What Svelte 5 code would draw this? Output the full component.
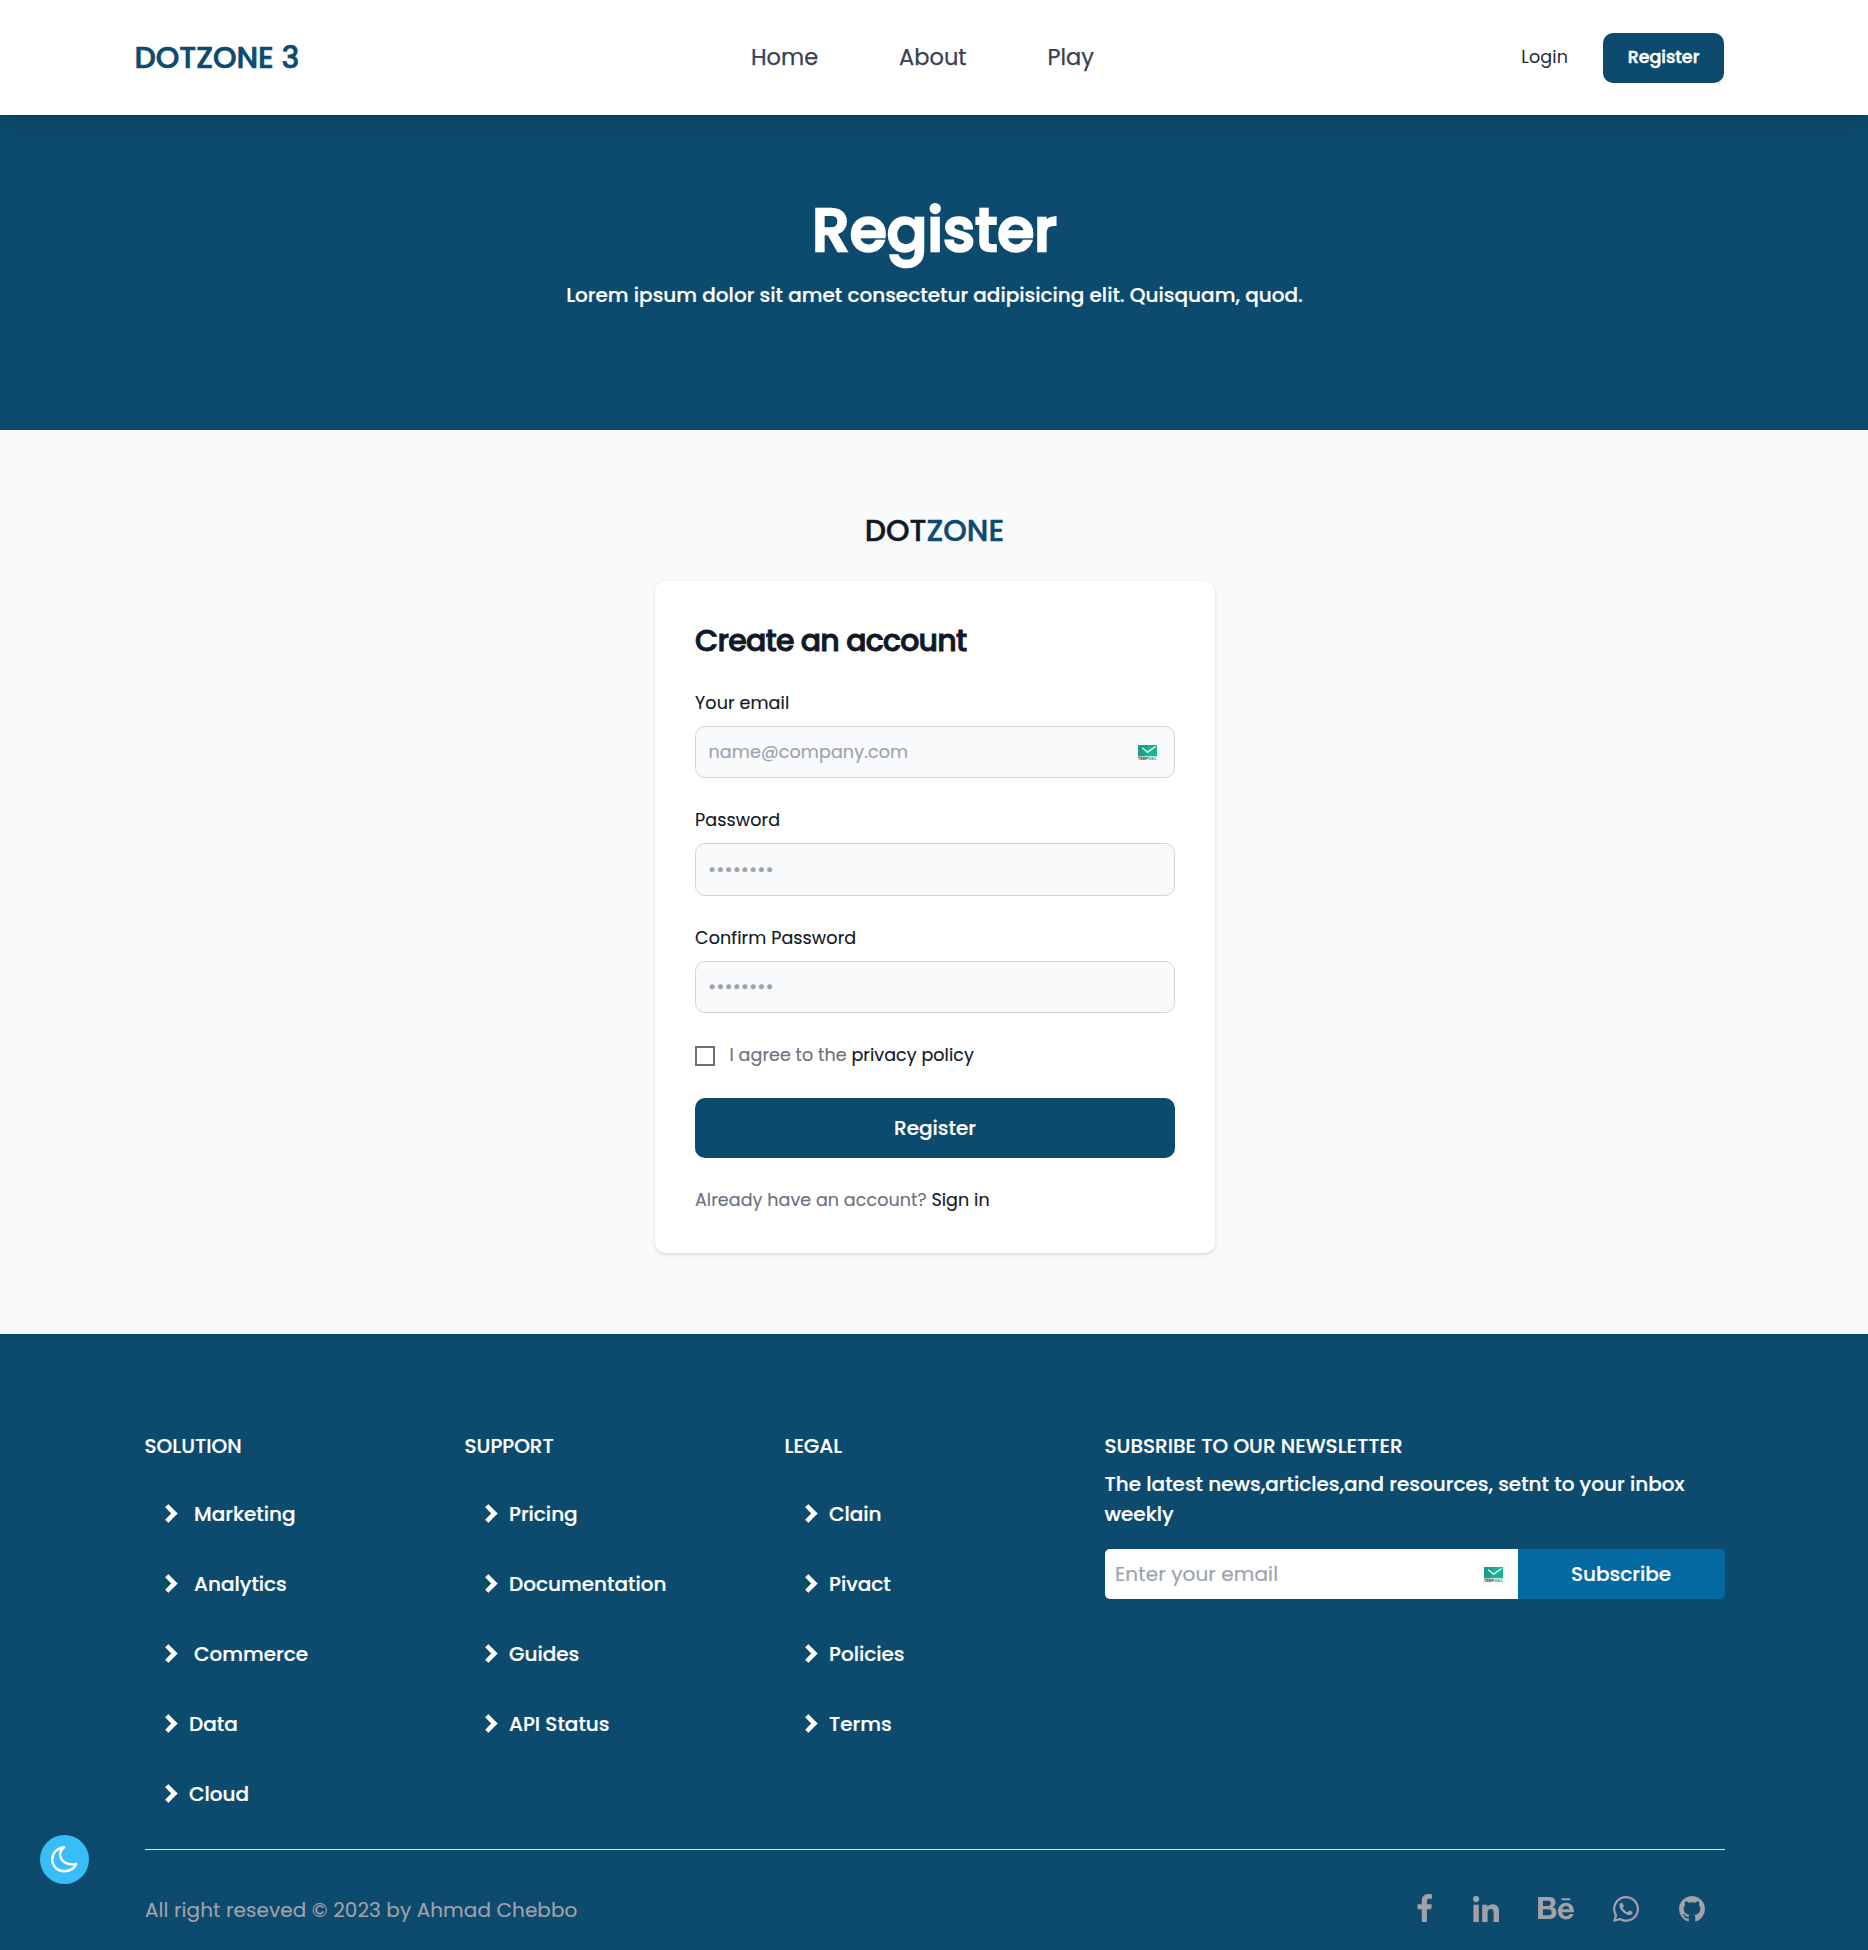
<script>
  const nav = ['Home', 'About', 'Play'];
  const columns = [
    {
      title: 'SOLUTION',
      links: [
        { label: 'Marketing', wide: true },
        { label: 'Analytics', wide: true },
        { label: 'Commerce', wide: true },
        { label: 'Data' },
        { label: 'Cloud' }
      ]
    },
    {
      title: 'SUPPORT',
      links: [{ label: 'Pricing' }, { label: 'Documentation' }, { label: 'Guides' }, { label: 'API Status' }]
    },
    {
      title: 'LEGAL',
      links: [{ label: 'Clain' }, { label: 'Pivact' }, { label: 'Policies' }, { label: 'Terms' }]
    }
  ];
  const fields = [
    { id: 'email', label: 'Your email', type: 'email', placeholder: 'name@company.com', mail: true },
    { id: 'password', label: 'Password', type: 'password', placeholder: '••••••••' },
    { id: 'confirm', label: 'Confirm Password', type: 'password', placeholder: '••••••••' }
  ];
</script>

{#snippet mailBadge()}
  <svg class="mail" viewBox="0 0 19 16" aria-hidden="true">
    <rect x="0" y="0" width="19" height="11.3" rx="0.6" fill="#1bb394" />
    <path d="M0 0H10L6 11.3H0Z" fill="#1f9c87" />
    <path d="M4.3 2.8L9.5 7.2L17.6 1.5" fill="none" stroke="#fff" stroke-width="1.4" />
    <text class="temp" x="0.1" y="15.3" textLength="9.8" lengthAdjust="spacingAndGlyphs">TEMP</text>
    <text class="tail" x="10" y="15.3" textLength="8.8" lengthAdjust="spacingAndGlyphs">MAIL</text>
  </svg>
{/snippet}

<div class="page">
  <header>
    <a class="logo" href="/">DOTZONE 3</a>
    <nav>
      {#each nav as item}<a href="/">{item}</a>{/each}
    </nav>
    <div class="auth">
      <a class="login" href="/">Login</a>
      <a class="signup" href="/">Register</a>
    </div>
  </header>

  <section class="hero">
    <h1>Register</h1>
    <p>Lorem ipsum dolor sit amet consectetur adipisicing elit. Quisquam, quod.</p>
  </section>

  <main>
    <a class="brand" href="/">DOT<span>ZONE</span></a>
    <form class="card">
      <h2>Create an account</h2>
      {#each fields as f}
        <div class="field">
          <label for={f.id}>{f.label}</label>
          <div class="control">
            <input id={f.id} type={f.type} placeholder={f.placeholder} />
            {#if f.mail}<span class="badge">{@render mailBadge()}</span>{/if}
          </div>
        </div>
      {/each}
      <div class="agree">
        <span class="box"></span>
        <span>I agree to the <a href="/">privacy policy</a></span>
      </div>
      <button type="button" class="submit">Register</button>
      <p class="have">Already have an account? <a href="/">Sign in</a></p>
    </form>
  </main>

  <footer>
    <div class="cols">
      {#each columns as col}
        <div class="col">
          <h3>{col.title}</h3>
          <ul>
            {#each col.links as link}
              <li>
                <svg class="chev" viewBox="0 0 13 19" aria-hidden="true">
                  <path d="M0.5 3.2L3.3 0.4L12.4 9.5L3.3 18.6L0.5 15.8L6.4 9.5Z" />
                </svg>
                <a class:wide={link.wide} href="/">{link.label}</a>
              </li>
            {/each}
          </ul>
        </div>
      {/each}
      <div class="news">
        <h3>SUBSRIBE TO OUR NEWSLETTER</h3>
        <p>The latest news,articles,and resources, setnt to your inbox weekly</p>
        <div class="subscribe">
          <input type="email" placeholder="Enter your email" />
          <span class="badge tile">{@render mailBadge()}</span>
          <button type="button">Subscribe</button>
        </div>
      </div>
    </div>
    <div class="bottom">
      <p>All right reseved © 2023 by Ahmad Chebbo</p>
      <div class="social">
        <svg class="fb" viewBox="479 0 864 1664"><path d="M1343 12v264h-157q-86 0-116 36t-30 108v189h293l-39 296h-254v759h-306v-759h-255v-296h255v-218q0-186 104-288.5t277-102.5q147 0 228 12z" /></svg>
        <svg class="in" viewBox="0 0 448 448"><path d="M100.28 448H7.4V148.9h92.88zM53.79 108.1C24.09 108.1 0 83.5 0 53.8a53.79 53.79 0 0 1 107.58 0c0 29.7-24.1 54.3-53.79 54.3zM447.9 448h-92.68V302.4c0-34.7-.7-79.2-48.29-79.2-48.29 0-55.69 37.7-55.69 76.7V448h-92.78V148.9h89.08v40.8h1.3c12.4-23.5 42.69-48.3 87.88-48.3 94 0 111.28 61.9 111.28 142.3V448z" /></svg>
        <svg class="be" viewBox="0 75 576 362"><path d="M232 237.2c31.8-15.2 48.4-38.2 48.4-74 0-70.6-52.6-87.8-113.3-87.8H0v354.4h171.8c64.4 0 124.9-30.9 124.9-102.9 0-44.5-21.1-77.4-64.7-89.7zM77.9 135.9H151c28.1 0 53.4 7.9 53.4 40.5 0 30.1-19.7 42.2-47.5 42.2h-79v-82.7zm83.3 233.7H77.9V272h84.9c34.3 0 56 14.3 56 50.6 0 35.8-25.9 47-57.6 47zm358.5-240.7H376V94h143.7v34.9zM576 305.2c0-75.9-44.4-139.2-124.9-139.2-78.2 0-131.3 58.8-131.3 135.8 0 79.9 50.3 134.7 131.3 134.7 61.3 0 101-27.6 120.1-86.3H509c-6.7 21.9-34.3 33.5-55.7 33.5-41.3 0-63-24.2-63-65.3h185.1c.3-4.2.6-8.7.6-13.2zM390.4 274c2.3-33.7 24.7-54.8 58.5-54.8 35.4 0 53.2 20.8 56.2 54.8H390.4z" /></svg>
        <svg class="wa" viewBox="0 32 448 448"><path d="M380.9 97.1C339 55.1 283.2 32 223.9 32c-122.4 0-222 99.6-222 222 0 39.1 10.2 77.3 29.6 111L0 480l117.7-30.9c32.4 17.7 68.9 27 106.1 27h.1c122.3 0 224.1-99.6 224.1-222 0-59.3-25.2-115-67.1-157zm-157 341.6c-33.2 0-65.7-8.9-94-25.7l-6.7-4-69.8 18.3L72 359.2l-4.4-7c-18.5-29.4-28.2-63.3-28.2-98.2 0-101.7 82.8-184.5 184.6-184.5 49.3 0 95.6 19.2 130.4 54.1 34.8 34.9 56.2 81.2 56.1 130.5 0 101.8-84.9 184.6-186.6 184.6zm101.2-138.2c-5.5-2.8-32.8-16.2-37.9-18-5.1-1.9-8.8-2.8-12.5 2.8-3.7 5.6-14.3 18-17.6 21.8-3.2 3.7-6.5 4.2-12 1.4-32.6-16.3-54-29.1-75.5-66-5.7-9.8 5.7-9.1 16.3-30.3 1.8-3.7.9-6.9-.5-9.7-1.4-2.8-12.5-30.1-17.1-41.2-4.5-10.8-9.1-9.3-12.5-9.5-3.2-.2-6.9-.2-10.6-.2-3.7 0-9.7 1.4-14.8 6.9-5.1 5.6-19.4 19-19.4 46.3 0 27.3 19.9 53.7 22.6 57.4 2.8 3.7 39.1 59.7 94.8 83.8 35.2 15.2 49 16.5 66.6 13.9 10.7-1.6 32.8-13.4 37.4-26.4 4.6-13 4.6-24.1 3.2-26.4-1.3-2.5-5-3.9-10.5-6.6z" /></svg>
        <svg class="gh" viewBox="128 128 1536 1536"><path d="M896 128q209 0 385.5 103t279.5 279.5 103 385.5q0 251-146.5 451.5t-378.5 277.5q-27 5-40-7t-13-30q0-3 .5-76.5t.5-134.5q0-97-52-142 57-6 102.5-18t94-39 81-66.5 53-105 20.5-150.5q0-119-79-206 37-91-8-204-28-9-81 11t-92 44l-38 24q-93-26-192-26t-192 26q-16-11-42.5-27t-83.5-38.5-85-13.5q-45 113-8 204-79 87-79 206 0 85 20.5 150t52.5 105 80.5 67 94 39 102.5 18q-39 36-49 103-21 10-45 15t-57 5-65.5-21.5-55.5-62.5q-19-32-48.5-52t-49.5-24l-20-3q-21 0-29 4.5t-5 11.5 9 14 13 12l7 5q22 10 43.5 38t31.5 51l10 23q13 38 44 61.5t67 30 69.5 7 55.5-3.5l23-4q0 38 .5 88.5t.5 54.5q0 18-13 30t-40 7q-232-77-378.5-277.5t-146.5-451.5q0-209 103-385.5t279.5-279.5 385.5-103z" /></svg>
      </div>
    </div>
  </footer>

  <button type="button" class="theme" aria-label="Toggle dark mode">
    <svg viewBox="0 0 26.5 26.5">
      <path d="M13.2 1.2C6 2 1.2 7 1.2 13.5C1.2 20 6.5 25.2 13 25.2C18.5 25.2 23.5 22.5 25.3 17.8C17 20 9.2 15.5 9.2 8.5C9.2 5.5 10.7 3 13.2 1.2Z" />
    </svg>
  </button>
</div>

<style>
  :global(body) { margin: 0; background: #0c4a6e; }
  .page { position: relative; width: 1868px; height: 1950px; overflow: hidden; font-family: Poppins, Inter, 'Open Sans', sans-serif; background: #0c4a6e; }
  .page * { box-sizing: border-box; }
  a { color: inherit; text-decoration: none; }
  h1, h2, h3, p, ul { margin: 0; padding: 0; }
  ul { list-style: none; }
  button, input { font-family: inherit; border: 0; margin: 0; }

  header { position: relative; z-index: 1; display: grid; grid-template-columns: 616.5px 1fr auto; align-items: center; height: 115px; padding: 0 144px 0 134.5px; background: #fff; box-shadow: 0 12.5px 19px -4px rgba(0, 0, 0, 0.1), 0 5px 7.5px -5px rgba(0, 0, 0, 0.1); }
  .logo { font-size: 30px; line-height: 40px; font-weight: 500; color: #0c4a6e; -webkit-text-stroke: 0.7px; }
  nav { display: flex; gap: 81px; font-size: 22.5px; line-height: 35px; color: #374151; -webkit-text-stroke: 0.25px; }
  .auth { display: flex; justify-content: flex-end; align-items: center; gap: 35px; font-size: 17.5px; line-height: 25px; }
  .login { color: #1f2937; letter-spacing: 0.12px; }
  .signup { width: 121px; padding: 12.5px 0; border-radius: 10px; background: #0c4a6e; color: #fff; font-weight: 500; text-align: center; -webkit-text-stroke: 0.5px; }

  .hero { height: 315px; padding: 84px 0 0 1px; text-align: center; color: #fff; }
  .hero h1 { font-size: 60px; line-height: 62px; font-weight: 500; letter-spacing: -0.1px; -webkit-text-stroke: 2.5px; }
  .hero p { margin-top: 19px; font-size: 20px; line-height: 30px; font-weight: 500; -webkit-text-stroke: 0.2px; }

  main { display: flex; flex-direction: column; align-items: center; height: 904px; padding: 81px 0 0 2px; background: #f9fafb; color: #111827; }
  .brand { margin: 0 1px 30px 0; font-size: 30px; line-height: 40px; font-weight: 500; -webkit-text-stroke: 0.45px; }
  .brand span { color: #0c4a6e; }
  .card { width: 560px; height: 672px; padding: 40px; border-radius: 10px; background: #fff; box-shadow: 0 1.25px 3.75px rgba(0, 0, 0, 0.1), 0 1.25px 2.5px -1.25px rgba(0, 0, 0, 0.1); }
  h2 { margin-bottom: 30px; font-size: 30px; line-height: 40px; font-weight: 500; letter-spacing: -0.75px; -webkit-text-stroke: 0.9px; }
  .field { margin-bottom: 30px; }
  label { display: block; margin-bottom: 10px; font-size: 17.5px; line-height: 25px; letter-spacing: 0.12px; -webkit-text-stroke: 0.15px; }
  .control { position: relative; display: flex; }
  .control input { width: 100%; height: 52.4px; padding: 0 12.5px; border: 1px solid #d1d5db; border-radius: 10px; background: #f9fafb; font-size: 17.5px; letter-spacing: 0.12px; -webkit-text-stroke: 0.2px; }
  .control input[type='password'] { letter-spacing: 1px; -webkit-text-stroke: 0.7px; }
  input::placeholder { color: #9ca3af; opacity: 1; }
  .badge { position: absolute; right: 18px; top: 19px; display: flex; }
  .mail { width: 19px; height: 16px; -webkit-text-stroke: 0; }
  .mail text { font: 700 3.6px 'Liberation Sans', sans-serif; }
  .temp { fill: #1f2f3f; }
  .tail { fill: #1bb394; }
  .agree { display: flex; align-items: center; gap: 14.5px; margin-bottom: 30px; font-size: 17.5px; line-height: 25px; letter-spacing: 0.07px; color: #6b7280; -webkit-text-stroke: 0.15px; }
  .agree a, .have a { color: #111827; }
  .box { width: 20px; height: 20px; border: 2px solid #707070; background: #fff; }
  .submit { display: block; width: 100%; height: 60px; padding: 0; border-radius: 10px; background: #0c4a6e; color: #fff; font-size: 20px; font-weight: 500; -webkit-text-stroke: 0.2px; }
  .have { margin-top: 30px; font-size: 17.5px; line-height: 25px; letter-spacing: 0.07px; color: #6b7280; -webkit-text-stroke: 0.15px; }

  footer { padding: 97px 143px 0 145px; color: #fff; font-size: 20px; line-height: 30px; font-weight: 500; }
  .cols { display: grid; grid-template-columns: 320px 320px 320px 620px; height: 418px; -webkit-text-stroke: 0.2px; }
  h3 { margin-left: -0.5px; font-size: 20px; line-height: 30px; font-weight: 500; }
  .col ul { margin-top: 38px; padding-left: 20px; }
  li { display: flex; align-items: center; height: 30px; margin-bottom: 40px; }
  .chev { width: 13px; height: 19px; margin: -2px 11px 0 0; fill: #fff; stroke: #fff; stroke-width: 0.6; stroke-linejoin: round; }
  .wide { padding-left: 5px; }
  .news p { margin: 8px 0 0 -0.5px; }
  .subscribe { position: relative; display: flex; height: 50px; margin-top: 20px; border-radius: 5px; overflow: hidden; }
  .subscribe input { width: 413px; padding: 0 10px; background: #fff; font-size: 20px; letter-spacing: 0.1px; }
  .subscribe button { flex: 1; padding: 0 1px 0 0; background: #0369a1; color: #fff; font-size: 20px; font-weight: 500; }
  .tile { right: auto; left: 376px; top: 13px; width: 25px; height: 25px; padding-right: 1px; align-items: center; justify-content: center; border-radius: 3px; background: #f9fafb; }

  .bottom { display: flex; justify-content: space-between; border-top: 1px solid #e5e7eb; width: 1580px; padding-top: 45px; color: #a1a1aa; font-weight: 400; letter-spacing: 0.09px; -webkit-text-stroke: 0.15px; }
  .social { display: flex; align-items: flex-start; height: 30px; padding-right: 20px; fill: #a1a1aa; }
  .social svg { display: block; }
  .fb { width: 15.5px; height: 28px; margin: -1px 40.5px 0 0; }
  .in { width: 26px; height: 26px; margin: 1px 39px 0 0; }
  .be { width: 36px; height: 22.5px; margin: 2px 39px 0 0; }
  .wa { width: 26px; height: 26px; margin: 1px 40px 0 0; }
  .gh { width: 26px; height: 26px; margin-top: 1px; }

  .theme { position: absolute; left: 40px; top: 1835px; display: flex; align-items: center; justify-content: center; width: 49px; height: 49px; padding: 0; border-radius: 50%; background: #38bdf8; }
  .theme svg { width: 26.5px; height: 26.5px; fill: none; stroke: #fff; stroke-width: 2.4; stroke-linejoin: round; }
</style>
